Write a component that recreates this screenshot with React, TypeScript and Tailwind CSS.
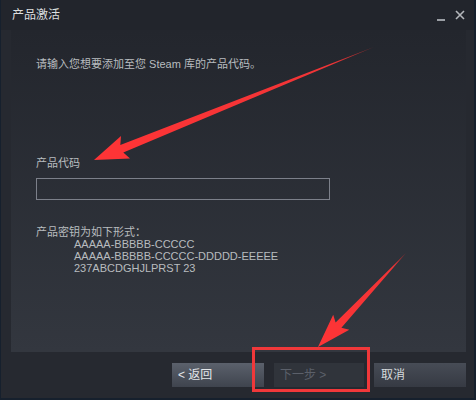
import React from 'react';

type Pt = [number, number];

// tapered red arrow like a screenshot annotation
function arrowPoints(tail: Pt, tip: Pt, headLen: number, headW: number, shaftW: number) {
  const dx = tip[0] - tail[0];
  const dy = tip[1] - tail[1];
  const len = Math.hypot(dx, dy);
  const ux = dx / len;
  const uy = dy / len;
  const nx = -uy;
  const ny = ux;
  const bx = tip[0] - ux * headLen;
  const by = tip[1] - uy * headLen;
  const p = (x: number, y: number) => `${x.toFixed(1)},${y.toFixed(1)}`;
  return [
    p(tail[0], tail[1]),
    p(bx + (nx * shaftW) / 2, by + (ny * shaftW) / 2),
    p(bx + (nx * headW) / 2 - ux * 4, by + (ny * headW) / 2 - uy * 4),
    p(tip[0], tip[1]),
    p(bx - (nx * headW) / 2 - ux * 4, by - (ny * headW) / 2 - uy * 4),
    p(bx - (nx * shaftW) / 2, by - (ny * shaftW) / 2),
  ].join(' ');
}

const font = { fontFamily: '"Liberation Sans", "Noto Sans CJK SC", sans-serif' };

export default function App() {
  return (
    <div
      className="relative w-[476px] h-[400px] flex flex-col bg-[#262930] border-l border-r-2 border-b-2 border-[#16202d] text-[11px] overflow-hidden"
      style={font}
    >
      {/* title bar */}
      <div className="h-[30px] flex items-center justify-between pl-[11px] pr-[9px] bg-[#22252c]">
        <span className="text-[12px] text-[#dcdedf]">产品激活</span>
        <div className="flex items-center gap-[10px]">
          <span className="block w-[8px] h-[2px] bg-[#9a9ea4] mt-[9px]" />
          <svg width="10" height="10" viewBox="0 0 10 10">
            <path d="M1 1 L9 9 M9 1 L1 9" stroke="#b4b7bb" strokeWidth="1.6" />
          </svg>
        </div>
      </div>

      {/* content panel */}
      <div className="mx-[10px] mr-[8px] h-[322px] bg-gradient-to-b from-[#23262d] to-[#33373f] pl-[25px] text-[#b8bcbf]">
        <p className="pt-[27px] leading-[14px]">请输入您想要添加至您 Steam 库的产品代码。</p>
        <p className="mt-[85px] leading-[14px]">产品代码</p>
        <div className="mt-[8px] w-[294px] h-[22px] border border-[#7c808a] bg-transparent" />
        <p className="mt-[26px] leading-[12px]">产品密钥为如下形式：</p>
        <div className="pl-[38px] leading-[12px]">
          <p>AAAAA-BBBBB-CCCCC</p>
          <p>AAAAA-BBBBB-CCCCC-DDDDD-EEEEE</p>
          <p>237ABCDGHJLPRST 23</p>
        </div>
      </div>

      {/* footer buttons */}
      <div className="flex-1 flex justify-end items-start gap-[10px] pt-[11px] pr-[8px] text-[12px]">
        <button className="w-[92px] h-[24px] text-left pl-[6px] text-[#e4e7ea] bg-gradient-to-b from-[#5b616c] to-[#3f444e]">
          &lt; 返回
        </button>
        <button className="w-[90px] h-[24px] text-left pl-[6px] text-[#5b606a] bg-[#30343b]">
          下一步 &gt;
        </button>
        <button className="w-[92px] h-[24px] text-left pl-[7px] text-[#d6dadd] bg-gradient-to-b from-[#474c56] to-[#363a43]">
          取消
        </button>
      </div>

      {/* annotations */}
      <div className="absolute left-[251px] top-[347px] w-[118px] h-[45px] border-[3px] border-[#f0383a]" />
      <svg className="absolute left-0 top-0 pointer-events-none" width="476" height="400">
        <defs>
          <linearGradient id="a1" x1="373" y1="47" x2="93" y2="160" gradientUnits="userSpaceOnUse">
            <stop offset="0" stopColor="#8a2a2c" />
            <stop offset="0.15" stopColor="#f03436" />
            <stop offset="1" stopColor="#ff3436" />
          </linearGradient>
          <linearGradient id="a2" x1="405" y1="253" x2="317" y2="347" gradientUnits="userSpaceOnUse">
            <stop offset="0" stopColor="#8a2a2c" />
            <stop offset="0.15" stopColor="#f03436" />
            <stop offset="1" stopColor="#ff3436" />
          </linearGradient>
        </defs>
        <polygon points={arrowPoints([373, 47], [93, 160], 30, 24, 8)} fill="url(#a1)" />
        <polygon points={arrowPoints([405, 253], [317, 347], 30, 22, 8)} fill="url(#a2)" />
      </svg>
    </div>
  );
}
